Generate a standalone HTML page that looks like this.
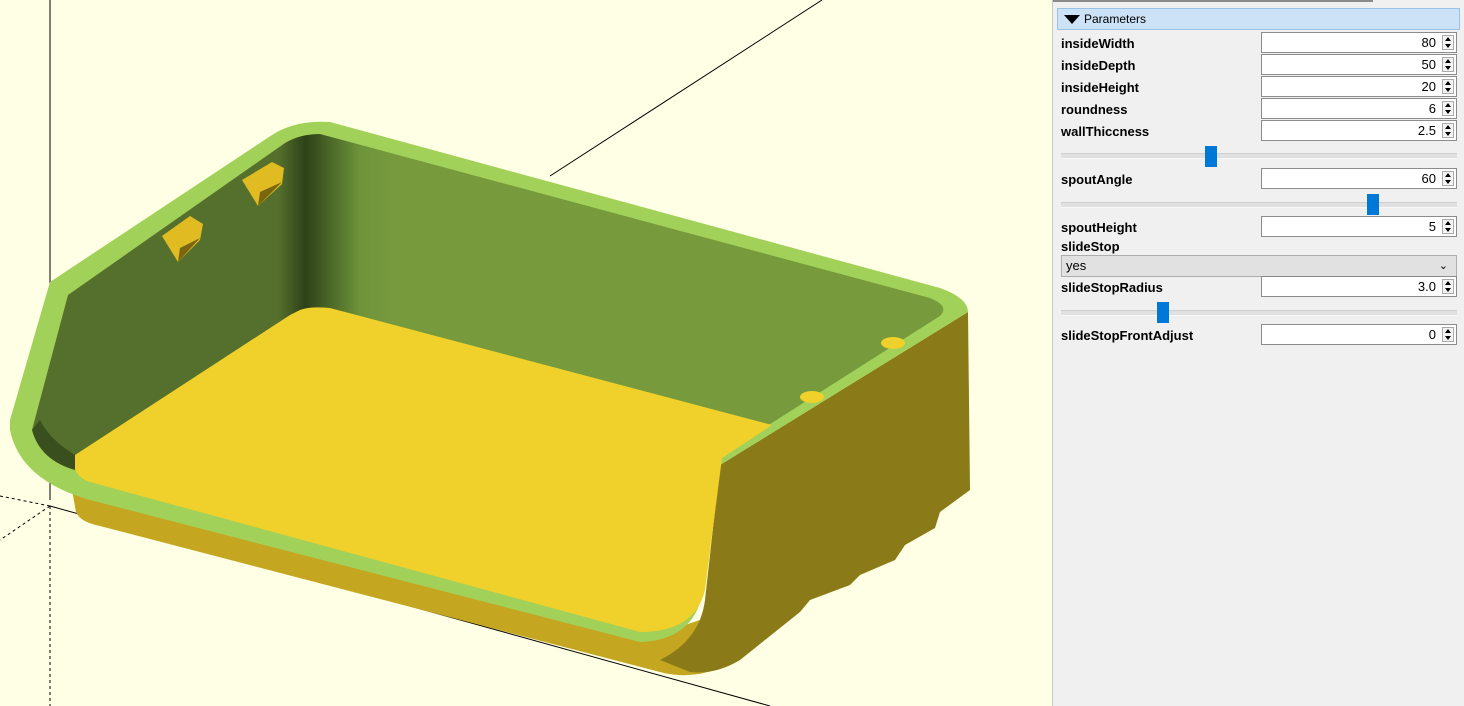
<!DOCTYPE html>
<html><head><meta charset="utf-8"><style>
body{margin:0;width:1464px;height:706px;overflow:hidden;background:#ffffe5;font-family:"Liberation Sans",sans-serif;position:relative}
#vp{position:absolute;left:0;top:0}
#panel{position:absolute;left:1052px;top:0;width:412px;height:706px;background:#f0f0f0;border-left:1px solid #c8c8c8}
.topline{position:absolute;left:0;top:0;width:320px;height:2px;background:#8a8a8a}
.hdr{position:absolute;left:4px;top:8px;width:403px;height:22px;background:#cce2f6;border:1px solid #99c2e8;box-sizing:border-box;font-size:12px;line-height:21px;color:#000}
.hdr span{display:inline-block;width:0;height:0;border-left:8px solid transparent;border-right:8px solid transparent;border-top:9px solid #000;margin:0 4px 0 6px;vertical-align:-1px}
.lbl{position:absolute;left:8px;font-size:13px;font-weight:bold;color:#000}
.inp{position:absolute;left:208px;width:196px;height:21px;background:#fff;border:1px solid #8c8c8c;box-sizing:border-box;font-size:13px;line-height:19px;text-align:right;padding-right:20px}
.inp i{position:absolute;right:2px;top:2px;width:12px;height:15px;border:1px solid #aaa;box-sizing:border-box;background:#f4f4f4}
.inp i:before{content:"";position:absolute;left:2px;top:1px;border-left:3px solid transparent;border-right:3px solid transparent;border-bottom:4px solid #000}
.inp i:after{content:"";position:absolute;left:2px;top:8px;border-left:3px solid transparent;border-right:3px solid transparent;border-top:4px solid #000}
.sl{position:absolute;left:8px;width:396px;height:4px;background:#e0e0e0;border-top:1px solid #d0d0d0;border-bottom:1px solid #f8f8f8}
.th{position:absolute;width:12px;height:21px;background:#0078d7}
.sel{position:absolute;left:8px;top:255px;width:396px;height:22px;background:#e1e1e1;border:1px solid #adadad;box-sizing:border-box;font-size:13px;line-height:20px;padding-left:4px}
</style></head><body>
<svg id="vp" width="1052" height="706" viewBox="0 0 1052 706">
<defs>
<linearGradient id="bw" x1="0" x2="1" y1="0" y2="0">
<stop offset="0" stop-color="#55702d"/><stop offset="0.27" stop-color="#55702d"/><stop offset="0.3" stop-color="#2e4218"/><stop offset="0.36" stop-color="#6e943a"/><stop offset="0.4" stop-color="#779a3d"/><stop offset="1" stop-color="#779a3d"/>
</linearGradient>
</defs>
<line x1="50" y1="0" x2="50" y2="500" stroke="#000" stroke-width="1"/>
<line x1="550" y1="176" x2="822" y2="0" stroke="#000" stroke-width="1"/>
<line x1="50" y1="506" x2="770" y2="706" stroke="#000" stroke-width="1"/>
<line x1="50" y1="506" x2="0" y2="496" stroke="#000" stroke-dasharray="3,3"/>
<line x1="50" y1="506" x2="0" y2="540" stroke="#000" stroke-dasharray="3,3"/>
<line x1="50" y1="506" x2="50" y2="706" stroke="#000" stroke-dasharray="3,3"/>
<path d="M72 490 L76 512 Q80 522 100 526 L660 672 Q690 680 720 668 L740 660 L700 620 L640 640 Z" fill="#c4a620"/>
<path d="M720 465 L968 312 L970 490 L940 512 L935 528 L905 545 L895 560 L860 575 L850 585 L810 600 L800 612 L740 660 Q715 675 690 672 L660 660 Q700 640 705 600 Z" fill="#8b7a18"/>
<path d="M50 282 L272 135 Q295 120 330 122 L940 288 Q968 298 968 312 L720 465 L703 590 Q695 640 640 642 L90 500 Q20 480 10 430 L10 420 Z" fill="#a2d15a"/>
<path d="M68 295 L285 143 Q300 134 320 134 L930 298 Q950 306 940 316 L745 440 L700 460 L300 320 L75 458 Q45 455 32 430 Z" fill="url(#bw)"/>
<path d="M300 310 Q310 306 330 308 L772 425 L722 458 L705 590 Q695 632 640 632 L90 482 Q70 475 75 455 L290 315 Z" fill="#f0d02a"/>
<path d="M32 430 Q40 460 75 470 L75 455 Q50 440 40 420 Z" fill="#3a4f1e"/>
<path d="M162 236 L190 216 L203 224 L200 240 L178 262 Z" fill="#e0bc22"/><path d="M180 248 L200 238 L178 262 Z" fill="#7a6510"/>
<path d="M242 180 L272 162 L284 168 L282 184 L258 206 Z" fill="#e0bc22"/><path d="M260 192 L282 182 L258 206 Z" fill="#7a6510"/>
<ellipse cx="893" cy="343" rx="12" ry="6" fill="#f0d02a"/>
<ellipse cx="812" cy="397" rx="12" ry="6" fill="#f0d02a"/>
</svg>
<div id="panel">
<div class="topline"></div>
<div class="hdr"><span></span>Parameters</div>
<div class="lbl" style="top:36px">insideWidth</div><div class="inp" style="top:32px">80<i></i></div>
<div class="lbl" style="top:58px">insideDepth</div><div class="inp" style="top:54px">50<i></i></div>
<div class="lbl" style="top:80px">insideHeight</div><div class="inp" style="top:76px">20<i></i></div>
<div class="lbl" style="top:102px">roundness</div><div class="inp" style="top:98px">6<i></i></div>
<div class="lbl" style="top:124px">wallThiccness</div><div class="inp" style="top:120px">2.5<i></i></div>
<div class="sl" style="top:153px"></div><div class="th" style="left:152px;top:146px"></div>
<div class="lbl" style="top:172px">spoutAngle</div><div class="inp" style="top:168px">60<i></i></div>
<div class="sl" style="top:202px"></div><div class="th" style="left:314px;top:194px"></div>
<div class="lbl" style="top:220px">spoutHeight</div><div class="inp" style="top:216px">5<i></i></div>
<div class="lbl" style="top:239px">slideStop</div>
<div class="sel">yes<span style="position:absolute;right:8px;top:0;font-size:11px">&#8964;</span></div>
<div class="lbl" style="top:280px">slideStopRadius</div><div class="inp" style="top:276px">3.0<i></i></div>
<div class="sl" style="top:310px"></div><div class="th" style="left:104px;top:302px"></div>
<div class="lbl" style="top:328px">slideStopFrontAdjust</div><div class="inp" style="top:324px">0<i></i></div>
</div>
</body></html>
